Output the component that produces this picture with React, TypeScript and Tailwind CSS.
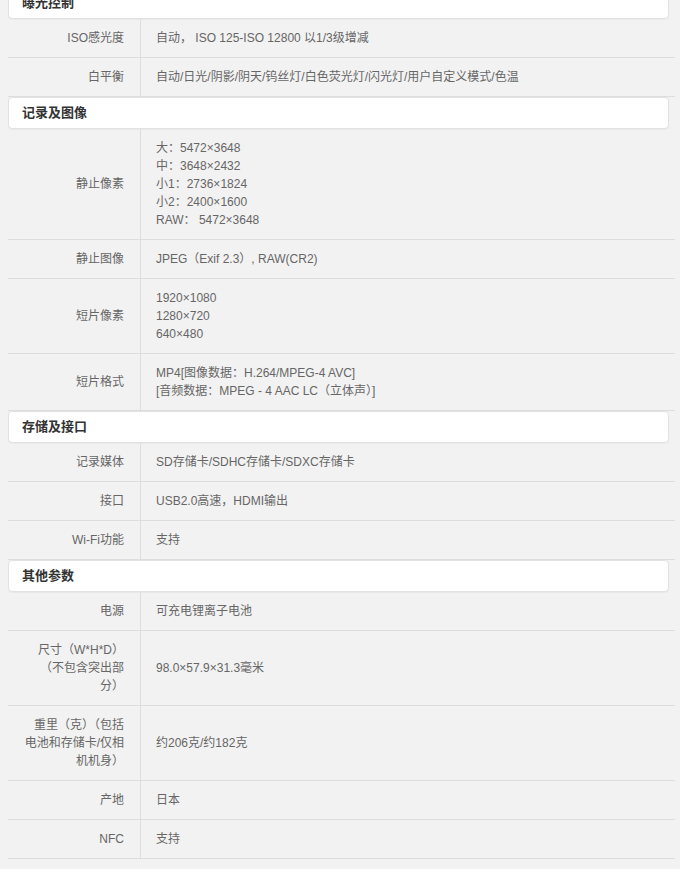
import React from "react";

type Row = { label: React.ReactNode; value: React.ReactNode };
type Section = { title: string; rows: Row[] };

const sections: Section[] = [
  {
    title: "曝光控制",
    rows: [
      { label: "ISO感光度", value: "自动， ISO 125-ISO 12800 以1/3级增减" },
      { label: "白平衡", value: "自动/日光/阴影/阴天/钨丝灯/白色荧光灯/闪光灯/用户自定义模式/色温" },
    ],
  },
  {
    title: "记录及图像",
    rows: [
      {
        label: "静止像素",
        value: (
          <>
            <div>大：5472×3648</div>
            <div>中：3648×2432</div>
            <div>小1：2736×1824</div>
            <div>小2：2400×1600</div>
            <div>RAW： 5472×3648</div>
          </>
        ),
      },
      { label: "静止图像", value: "JPEG（Exif 2.3）, RAW(CR2)" },
      {
        label: "短片像素",
        value: (
          <>
            <div>1920×1080</div>
            <div>1280×720</div>
            <div>640×480</div>
          </>
        ),
      },
      {
        label: "短片格式",
        value: (
          <>
            <div>MP4[图像数据：H.264/MPEG-4 AVC]</div>
            <div>[音频数据：MPEG - 4 AAC LC（立体声）]</div>
          </>
        ),
      },
    ],
  },
  {
    title: "存储及接口",
    rows: [
      { label: "记录媒体", value: "SD存储卡/SDHC存储卡/SDXC存储卡" },
      { label: "接口", value: "USB2.0高速，HDMI输出" },
      { label: "Wi-Fi功能", value: "支持" },
    ],
  },
  {
    title: "其他参数",
    rows: [
      { label: "电源", value: "可充电锂离子电池" },
      { label: "尺寸（W*H*D）（不包含突出部分）", value: "98.0×57.9×31.3毫米" },
      { label: "重里（克）（包括电池和存储卡/仅相机机身）", value: "约206克/约182克" },
      { label: "产地", value: "日本" },
      { label: "NFC", value: "支持" },
    ],
  },
];

export default function App() {
  return (
    <div
      className="w-[680px] h-[869px] overflow-hidden bg-[#f2f2f2] text-[#666] text-[12px] leading-[18px]"
      style={{ fontFamily: '"Liberation Sans", Arial, "Noto Sans CJK SC", sans-serif' }}
    >
      <div className="mt-[-13px] ml-[8px] w-[667px]">
        {sections.map((s) => (
          <div key={s.title}>
            <div className="mr-[6px] h-[32px] flex items-center pl-[13px] bg-white rounded-[4px] border border-[#e2e2e2] shadow-[0_1px_1px_rgba(0,0,0,0.04)] text-[13px] font-bold text-[#333]">
              {s.title}
            </div>
            {s.rows.map((r, i) => (
              <div key={i} className="flex border-b border-[#dddddd]">
                <div className="w-[133px] shrink-0 border-r border-[#dddddd] pl-4 pr-4 py-[10px] flex items-center justify-end text-right">
                  <div>{r.label}</div>
                </div>
                <div className="flex-1 pl-[15px] pr-4 py-[10px] flex items-center">
                  <div>{r.value}</div>
                </div>
              </div>
            ))}
          </div>
        ))}
      </div>
    </div>
  );
}
